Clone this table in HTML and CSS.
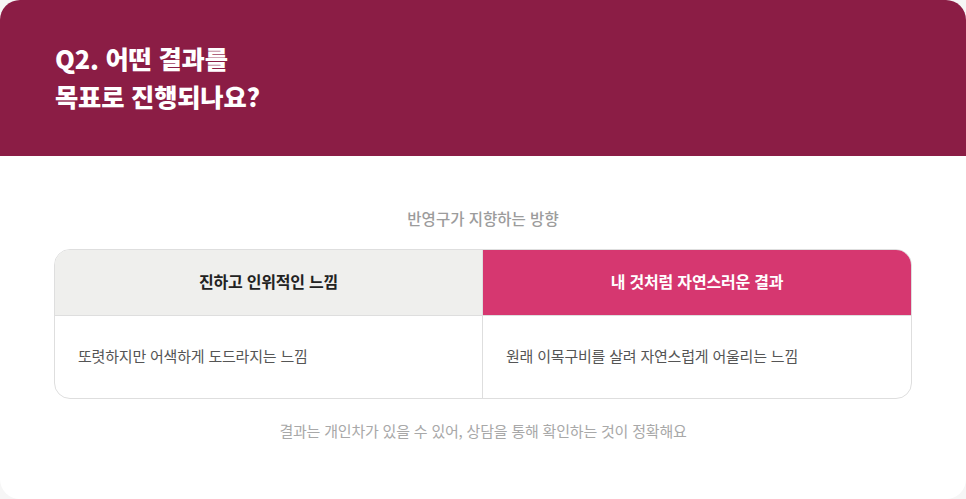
FILE: index.html
```html
<!DOCTYPE html>
<html lang="ko">
<head>
<meta charset="utf-8">
<link rel="stylesheet" href="styles.css">
</head>
<body>
<div class="card">
  <header class="hero">
    <h1 class="title">Q2. 어떤 결과를<br>목표로 진행되나요?</h1>
  </header>
  <main class="content">
    <p class="subtitle">반영구가 지향하는 방향</p>
    <div class="table">
      <div class="cell head head-left">진하고 인위적인 느낌</div>
      <div class="cell head head-right">내 것처럼 자연스러운 결과</div>
      <div class="cell body body-left">또렷하지만 어색하게 도드라지는 느낌</div>
      <div class="cell body body-right">원래 이목구비를 살려 자연스럽게 어울리는 느낌</div>
    </div>
    <p class="note">결과는 개인차가 있을 수 있어, 상담을 통해 확인하는 것이 정확해요</p>
  </main>
</div>
</body>
</html>
```
FILE: styles.css
```css
* { box-sizing: border-box; }
html, body { margin: 0; padding: 0; background: #f6f6f6; }
body {
  font-family: "Noto Sans CJK KR", "Noto Sans", sans-serif;
  width: 966px;
  height: 499px;
  overflow: hidden;
}
.card {
  width: 966px;
  height: 499px;
  background: #ffffff;
  border-radius: 20px;
  overflow: hidden;
}
.hero {
  height: 156px;
  background: #8b1d45;
  padding: 39px 0 0 55px;
}
.title {
  margin: 0;
  color: #ffffff;
  font-size: 25.3px;
  font-weight: 900;
  line-height: 38px;
  letter-spacing: -0.2px;
}
.content {
  padding: 51px 54px 0 54px;
  display: flex;
  flex-direction: column;
  align-items: stretch;
}
.subtitle {
  margin: 0;
  text-align: center;
  color: #9c9c9c;
  font-size: 15.5px;
  font-weight: 500;
  line-height: 22px;
  letter-spacing: 0;
}
.table {
  margin-top: 20px;
  display: grid;
  grid-template-columns: 428px 1fr;
  grid-template-rows: 66px 82px;
  border: 1px solid #dedede;
  border-radius: 16px;
  overflow: hidden;
}
.cell {
  display: flex;
  align-items: center;
  letter-spacing: -0.2px;
}
.head {
  justify-content: center;
  font-size: 16px;
  font-weight: 700;
  border-bottom: 1px solid #dedede;
  padding-bottom: 3px;
}
.head-left { background: #efefed; color: #222222; border-right: 1px solid #dedede; }
.head-right { background: #d63770; color: #ffffff; }
.body {
  padding-left: 23px;
  padding-bottom: 3px;
  font-size: 15px;
  color: #555555;
  font-weight: 400;
}
.body-left { border-right: 1px solid #dedede; }
.note {
  margin: 21px 0 0;
  text-align: center;
  color: #a8a8a8;
  font-size: 15px;
  line-height: 22px;
  letter-spacing: -0.2px;
}
```
